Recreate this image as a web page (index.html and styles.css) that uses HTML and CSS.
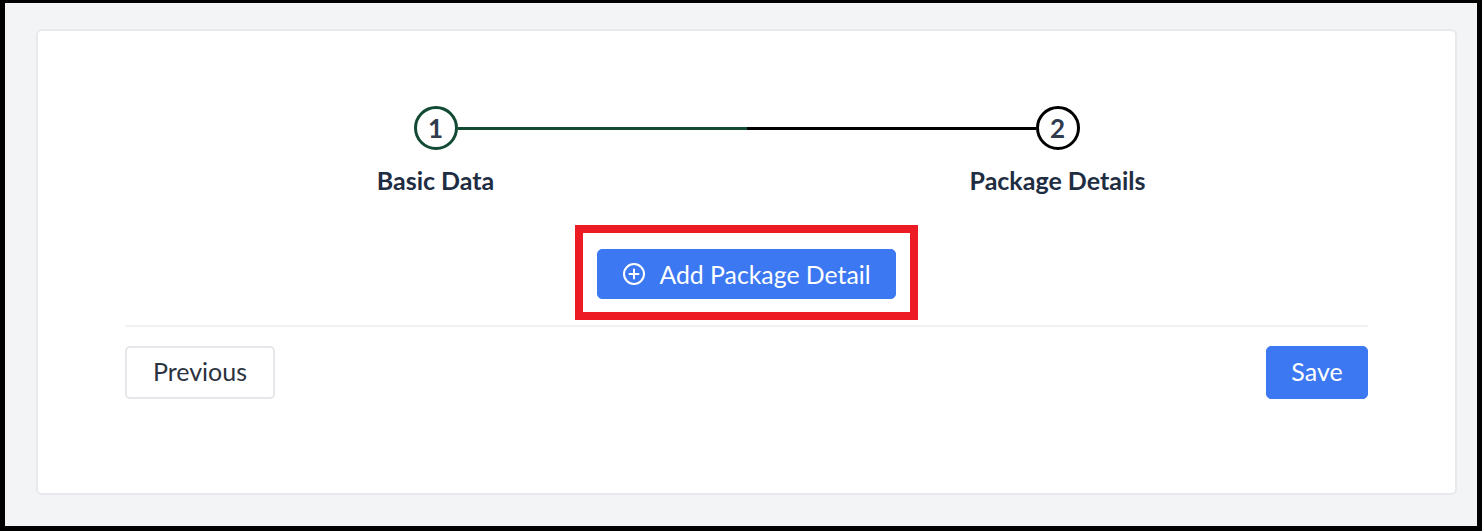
FILE: index.html
```html
<!DOCTYPE html>
<html lang="en">
  <head>
    <meta charset="UTF-8" />
    <meta name="viewport" content="width=device-width, initial-scale=1.0" />
    <title>Add Package Detail</title>
    <link rel="stylesheet" href="styles.css">
  </head>
  <body>
    <div class="frame">
      <div class="card">
        <div class="stepper">
          <div class="circle circle-done">1</div>
          <div class="line">
            <span class="line-done"></span>
            <span class="line-todo"></span>
          </div>
          <div class="circle circle-todo">2</div>
          <div class="label label-first">Basic Data</div>
          <div class="label label-second">Package Details</div>
        </div>

        <div class="highlight">
          <button class="button button-primary button-add" type="button">
            <svg class="icon" viewBox="0 0 24 24" fill="none" stroke="currentColor" stroke-width="2" stroke-linecap="round">
              <circle cx="12" cy="12" r="10" />
              <path d="M12 7.5v9M7.5 12h9" />
            </svg>
            Add Package Detail
          </button>
        </div>

        <div class="actions">
          <button class="button button-outline" type="button">Previous</button>
          <button class="button button-primary button-save" type="button">Save</button>
        </div>
      </div>
    </div>
  </body>
</html>
```

FILE: styles.css
```css
* {
  box-sizing: border-box;
}
body {
  margin: 0;
  font-family: Lato, "Liberation Sans", sans-serif;
}
.frame {
  height: 531px;
  padding: 26px 20px 31px 31px;
  background: #f2f4f6;
  border: solid #000;
  border-width: 3px 5px 5px 5px;
}
.card {
  height: 100%;
  padding: 75px 87px 0;
  background: #fff;
  border: 2px solid #e7e9ec;
  border-radius: 6px;
}
.stepper {
  display: grid;
  grid-template-columns: 100px 44px 100px 378px 100px 44px 100px;
  justify-content: center;
  align-items: center;
  row-gap: 14px;
  color: #1f2d43;
}
.circle {
  height: 44px;
  display: flex;
  align-items: center;
  justify-content: center;
  border-radius: 50%;
  color: #2f3b4e;
  font-size: 26px;
  font-weight: 700;
  background: #fff;
}
.circle-done {
  grid-column: 2;
  border: 3px solid #124a34;
}
.circle-todo {
  grid-column: 6;
  border: 3px solid #000;
}
.line {
  grid-column: 3 / 6;
  grid-row: 1;
  display: flex;
  height: 3px;
}
.line-done,
.line-todo {
  flex: 1;
}
.line-done {
  background: #124a34;
}
.line-todo {
  background: #000;
}
.label {
  grid-row: 2;
  text-align: center;
  font-size: 25px;
  font-weight: 700;
  line-height: 32px;
  white-space: nowrap;
}
.label-first {
  grid-column: 1 / 4;
}
.label-second {
  grid-column: 5 / 8;
}
.highlight {
  width: 343px;
  height: 95px;
  margin: 29px auto 0;
  padding-top: 16px;
  display: flex;
  align-items: flex-start;
  justify-content: center;
  border: 8px solid #ed1c24;
}
.button {
  height: 53px;
  padding: 0 6px 3px;
  border-radius: 5px;
  font-family: inherit;
  font-size: 25px;
  cursor: pointer;
}
.button-primary {
  color: #fff;
  background: #3b78f2;
  border: 1px solid #3b78f2;
}
.button-outline {
  width: 150px;
  color: #2b3340;
  background: #fff;
  border: 2px solid #e5e7eb;
}
.button-add {
  width: 299px;
  height: 50px;
  padding-bottom: 0;
  display: flex;
  align-items: center;
  justify-content: center;
  gap: 13px;
  font-size: 24.8px;
}
.button-save {
  width: 102px;
}
.icon {
  width: 24px;
  height: 24px;
}
.actions {
  display: flex;
  justify-content: space-between;
  margin-top: 5px;
  padding-top: 19px;
  border-top: 2px solid #f0f1f3;
}
```
